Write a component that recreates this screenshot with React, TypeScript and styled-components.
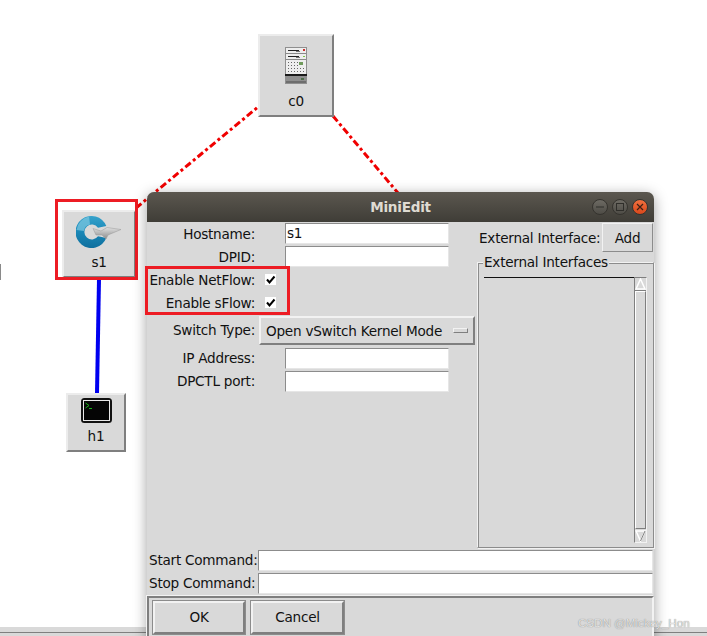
import React from "react";
import styled, { createGlobalStyle } from "styled-components";

const Global = createGlobalStyle`
  html, body { margin: 0; padding: 0; background: #fff; overflow: hidden; }
  #root { width: 707px; height: 636px; }
  * { box-sizing: border-box; }
`;

const Canvas = styled.div`
  position: relative;
  width: 707px;
  height: 636px;
  overflow: hidden;
  background: #fff;
  font-family: "DejaVu Sans", sans-serif;
  font-size: 13.6px;
  letter-spacing: -0.25px;
  color: #111;
`;

const Links = styled.svg`
  position: absolute;
  inset: 0;
`;

const BottomBar = styled.div`
  position: absolute;
  left: 0;
  right: 0;
  top: 627px;
  height: 9px;
  background: #d9d9d9;
  border-bottom: 2px solid #d9d9d9;
  &::after {
    content: "";
    display: block;
    margin-top: 5px;
    height: 1px;
    background: #7f7f7f;
  }
`;

const EdgeMark = styled.div`
  position: absolute;
  left: 0;
  top: 264px;
  width: 1px;
  height: 16px;
  background: #8a8a8a;
`;

const Node = styled.div<{ $x: number; $y: number; $w: number; $h: number; $gap?: number }>`
  position: absolute;
  left: ${(p) => p.$x}px;
  top: ${(p) => p.$y}px;
  width: ${(p) => p.$w}px;
  height: ${(p) => p.$h}px;
  background: #d9d9d9;
  border: 2px solid;
  border-color: #ececec #7f7f7f #7f7f7f #ececec;
  display: flex;
  flex-direction: column;
  align-items: center;
  justify-content: flex-end;
  gap: ${(p) => p.$gap ?? 5}px;
  padding-bottom: 5px;
  line-height: 17px;
`;

const Annotation = styled.div<{ $x: number; $y: number; $w: number; $h: number }>`
  position: absolute;
  left: ${(p) => p.$x}px;
  top: ${(p) => p.$y}px;
  width: ${(p) => p.$w}px;
  height: ${(p) => p.$h}px;
  border: 3px solid #ed1c24;
  pointer-events: none;
`;

const Window = styled.div`
  position: absolute;
  left: 147px;
  top: 192px;
  width: 507px;
  height: 460px;
  background: #d9d9d9;
  border-radius: 7px 7px 0 0;
  box-shadow: 0 3px 14px rgba(0, 0, 0, 0.38);
  display: flex;
  flex-direction: column;
`;

const TitleBar = styled.div`
  position: relative;
  height: 30px;
  flex: none;
  border-radius: 7px 7px 0 0;
  background: linear-gradient(#5b574f, #3f3d37);
  color: #dfdbd2;
  font-weight: 700;
  display: flex;
  align-items: center;
  justify-content: center;
`;

const WinButtons = styled.div`
  position: absolute;
  right: 6px;
  top: 7px;
  display: flex;
  gap: 4px;
`;

const WinButton = styled.div<{ $close?: boolean }>`
  width: 16px;
  height: 16px;
  border-radius: 50%;
  border: 1px solid #35332e;
  background: ${(p) => (p.$close ? "linear-gradient(#f0703f, #d9481c)" : "linear-gradient(#6d6a63, #4e4c46)")};
  display: flex;
  align-items: center;
  justify-content: center;
`;

const Main = styled.div`
  display: flex;
  height: 327px;
  flex: none;
`;

const LeftForm = styled.div`
  width: 329px;
  flex: none;
  display: grid;
  grid-template-columns: 108px 1fr;
  grid-auto-rows: min-content;
`;

const Label = styled.div<{ $h?: number }>`
  height: ${(p) => p.$h ?? 23}px;
  display: flex;
  align-items: center;
  justify-content: flex-end;
  white-space: nowrap;
`;

const FieldCell = styled.div<{ $top: number }>`
  height: 23px;
  padding: ${(p) => p.$top}px 0 0 30px;
  display: flex;
  align-items: flex-start;
`;

const Entry = styled.div<{ $w?: string }>`
  width: ${(p) => p.$w ?? "164px"};
  height: 21px;
  background: #fff;
  border: 1px solid;
  border-color: #8c8c8c #e6e6e6 #e6e6e6 #8c8c8c;
  padding: 0 1px;
  line-height: 19px;
`;

const CheckCell = styled.div`
  height: 23px;
  padding-left: 10px;
  display: flex;
  align-items: center;
`;

const CheckBox = styled.div`
  width: 11px;
  height: 11px;
  background: #fff;
  display: flex;
  align-items: center;
  justify-content: center;
`;

const Menu = styled.div`
  margin: 2px 0 0 4px;
  width: 216px;
  height: 29px;
  background: #d9d9d9;
  border: 2px solid;
  border-color: #f2f2f2 #7f7f7f #7f7f7f #f2f2f2;
  display: flex;
  align-items: center;
  justify-content: space-between;
  padding: 0 5px 0 5px;
  white-space: nowrap;
`;

const MenuMark = styled.div`
  width: 15px;
  height: 5px;
  background: #d9d9d9;
  border: 1px solid;
  border-color: #f2f2f2 #7f7f7f #7f7f7f #f2f2f2;
`;

const RightPane = styled.div`
  flex: 1;
  min-width: 0;
  padding: 1px 0 0 1px;
  display: flex;
  flex-direction: column;
`;

const InterfaceRow = styled.div`
  display: flex;
  align-items: center;
  justify-content: space-between;
  height: 29px;
  padding-left: 2px;
  padding-right: 1px;
  white-space: nowrap;
`;

const PlainButton = styled.div`
  width: 51px;
  height: 29px;
  flex: none;
  background: #d9d9d9;
  border: 1px solid;
  border-color: #f2f2f2 #8c8c8c #8c8c8c #f2f2f2;
  display: flex;
  align-items: center;
  justify-content: center;
`;

const FrameBox = styled.div`
  position: relative;
  margin-top: 10px;
  height: 286px;
  border: 1px solid;
  border-color: #f2f2f2 #8c8c8c #8c8c8c #f2f2f2;
  box-shadow: inset 1px 1px 0 #8c8c8c, 1px 1px 0 #f2f2f2;
  padding: 14px 6px 4px 6px;
  display: flex;
`;

const FrameTitle = styled.div`
  position: absolute;
  left: 5px;
  top: -9px;
  background: #d9d9d9;
  padding: 0 1px;
  line-height: 17px;
  white-space: nowrap;
`;

const ListArea = styled.div`
  flex: 1;
  border-top: 1px solid #111;
`;

const ScrollBar = styled.div`
  width: 13px;
  display: flex;
  flex-direction: column;
  background: #d9d9d9;
  border: 1px solid;
  border-color: #7f7f7f #f2f2f2 #f2f2f2 #7f7f7f;
`;

const ScrollArrow = styled.div`
  height: 13px;
  flex: none;
  display: flex;
`;

const ScrollTrack = styled.div`
  flex: 1;
  border: 1px solid;
  border-color: #fff #7f7f7f #7f7f7f #fff;
`;

const CommandRow = styled.div`
  display: flex;
  height: 23px;
  flex: none;
  align-items: flex-start;
  padding: 1px 1px 0 2px;
  line-height: 21px;
  white-space: nowrap;
`;

const CommandLabel = styled.div`
  width: 109px;
  flex: none;
`;

const Commands = styled.div`
  flex: none;
`;

const ButtonBar = styled.div`
  flex: 1;
  margin-top: 1px;
  border: 2px solid;
  border-color: #7f7f7f #f2f2f2 #f2f2f2 #7f7f7f;
  box-shadow: -1px -1px 0 #f2f2f2;
  padding: 3px 0 0 4px;
  display: flex;
  gap: 6px;
  align-items: flex-start;
`;

const ActionButton = styled.div<{ $w: number }>`
  width: ${(p) => p.$w}px;
  height: 33px;
  padding-bottom: 1px;
  background: #d9d9d9;
  border: 2px solid;
  border-color: #f2f2f2 #7f7f7f #7f7f7f #f2f2f2;
  outline: 1px solid #8c8c8c;
  display: flex;
  align-items: center;
  justify-content: center;
`;

const Watermark = styled.div`
  position: absolute;
  left: 578px;
  top: 615px;
  font-family: "Liberation Sans", sans-serif;
  font-size: 11.6px;
  letter-spacing: 0;
  line-height: 16px;
  color: #e2e2e2;
  text-shadow: 0 0 1px #6f6f6f;
  white-space: nowrap;
`;

const ServerIcon = () => (
  <svg width="22" height="37" viewBox="0 0 22 37">
    <rect x="0.5" y="0.5" width="21" height="36" fill="#eeeeee" stroke="#8f8f8f" strokeWidth="1" />
    <rect x="1" y="6" width="20" height="1" fill="#8a8a8a" />
    <rect x="3" y="3" width="11" height="1" fill="#222" />
    <rect x="11" y="4" width="4" height="1" fill="#777" />
    <rect x="18" y="2" width="2" height="2" fill="#c9302c" />
    <rect x="1" y="12" width="20" height="1" fill="#8a8a8a" />
    <rect x="3" y="9" width="11" height="1" fill="#222" />
    <rect x="11" y="10" width="4" height="1" fill="#777" />
    <rect x="18" y="9" width="2" height="1" fill="#7ac943" />
    <rect x="14" y="15" width="4" height="3" fill="#6f9a5b" />
    {[15, 18, 21].map((y) =>
      [3, 6, 9, 12].map((x) => <rect key={`${x}-${y}`} x={x} y={y} width="1" height="1" fill="#666" />)
    )}
    {[21, 24].map((y) =>
      [3, 6, 9, 12, 15, 18].map((x) => <rect key={`b${x}-${y}`} x={x} y={y} width="1" height="1" fill="#666" />)
    )}
    <rect x="0" y="27" width="22" height="2" fill="#1b1b1b" />
    <rect x="1" y="29" width="20" height="7" fill="#8f8f8f" />
    <rect x="1" y="34" width="20" height="2" fill="#6e6e6e" />
    <rect x="16" y="31" width="3" height="2" fill="#4e6e4a" />
  </svg>
);

const SwitchIcon = () => (
  <svg width="46" height="33" viewBox="0 0 46 33">
    <defs>
      <linearGradient id="ring" x1="0" y1="0" x2="0" y2="1">
        <stop offset="0" stopColor="#36a2cb" />
        <stop offset="0.5" stopColor="#1a87b6" />
        <stop offset="1" stopColor="#0f6f9e" />
      </linearGradient>
      <linearGradient id="arrow" x1="0" y1="0" x2="0" y2="1">
        <stop offset="0" stopColor="#e0e0e0" />
        <stop offset="1" stopColor="#8c8c8c" />
      </linearGradient>
    </defs>
    <path d="M30.3 10 A16 16 0 1 0 30.3 22 L22 20.3 A7.5 7.5 0 1 1 22 11.7 Z" fill="url(#ring)" />
    <path d="M0.5 14 A16 16 0 0 1 13 0.6 L14 8.6 A7.5 7.5 0 0 0 8 15 Z" fill="#79c5df" opacity="0.75" />
    <path d="M17 12.5 L25 15 L31 11.5 L45 13.5 L32 19 L30 23 L26 19 L20 19 Z" fill="url(#arrow)" stroke="#999" strokeWidth="0.5" />
  </svg>
);

const TerminalIcon = () => (
  <svg width="31" height="25" viewBox="0 0 31 25">
    <rect x="1" y="1" width="29" height="23" rx="2.5" fill="#000" stroke="#111" strokeWidth="2" />
    <rect x="2.5" y="2.5" width="26" height="20" fill="#050505" stroke="#e8e8e8" strokeWidth="1" />
    <path d="M4.5 5 L8 7.5 L4.5 10" fill="none" stroke="#17b317" strokeWidth="1" />
    <rect x="8" y="10" width="3" height="1" fill="#17b317" />
  </svg>
);

const Check = () => (
  <svg width="11" height="11" viewBox="0 0 11 11">
    <path d="M2 5.5 L4.5 8.5 L9.5 2.5" fill="none" stroke="#000" strokeWidth="2" />
  </svg>
);

const UpArrow = () => (
  <svg width="11" height="13" viewBox="0 0 11 13">
    <path d="M5.5 1 L10 11 H1 Z" fill="#d9d9d9" stroke="#fff" strokeWidth="1.5" />
    <path d="M0 12.5 H11" stroke="#7f7f7f" />
  </svg>
);

const DownArrow = () => (
  <svg width="11" height="13" viewBox="0 0 11 13">
    <path d="M1 2 H10 L5.5 12 Z" fill="#d9d9d9" stroke="#fff" strokeWidth="1.5" />
    <path d="M5.5 12 L10 2" stroke="#7f7f7f" />
  </svg>
);

export default function App() {
  return (
    <>
      <Global />
      <Canvas>
        <BottomBar />
        <EdgeMark />
        <Links width="707" height="636" viewBox="0 0 707 636">
          <path d="M136 208 L258 107" stroke="#f00000" strokeWidth="3" strokeDasharray="7 3 3 3" fill="none" />
          <path d="M333 116 L398 193" stroke="#f00000" strokeWidth="3" strokeDasharray="7 3 3 3" fill="none" />
          <path d="M99 279 L97 393" stroke="#0000f0" strokeWidth="4" fill="none" />
        </Links>

        <Node $x={258} $y={34} $w={76} $h={83} $gap={9}>
          <ServerIcon />
          <span>c0</span>
        </Node>
        <Node $x={62} $y={210} $w={74} $h={68}>
          <SwitchIcon />
          <span>s1</span>
        </Node>
        <Node $x={66} $y={393} $w={60} $h={59}>
          <TerminalIcon />
          <span>h1</span>
        </Node>

        <Annotation $x={55} $y={199} $w={83} $h={81} />

        <Window>
          <TitleBar>
            MiniEdit
            <WinButtons>
              <WinButton>
                <svg width="10" height="10" viewBox="0 0 10 10">
                  <path d="M1 5 H9" stroke="#2f2e2a" strokeWidth="1" />
                </svg>
              </WinButton>
              <WinButton>
                <svg width="10" height="10" viewBox="0 0 10 10">
                  <rect x="1.5" y="1.5" width="7" height="7" fill="none" stroke="#2f2e2a" strokeWidth="1" />
                </svg>
              </WinButton>
              <WinButton $close>
                <svg width="10" height="10" viewBox="0 0 10 10">
                  <path d="M2 2 L8 8 M8 2 L2 8" stroke="#3b2015" strokeWidth="1.2" />
                </svg>
              </WinButton>
            </WinButtons>
          </TitleBar>

          <Main>
            <LeftForm>
              <Label>Hostname:</Label>
              <FieldCell $top={1}>
                <Entry>s1</Entry>
              </FieldCell>
              <Label>DPID:</Label>
              <FieldCell $top={1}>
                <Entry />
              </FieldCell>
              <Label>Enable NetFlow:</Label>
              <CheckCell>
                <CheckBox>
                  <Check />
                </CheckBox>
              </CheckCell>
              <Label>Enable sFlow:</Label>
              <CheckCell>
                <CheckBox>
                  <Check />
                </CheckBox>
              </CheckCell>
              <Label $h={32}>Switch Type:</Label>
              <div>
                <Menu>
                  Open vSwitch Kernel Mode
                  <MenuMark />
                </Menu>
              </div>
              <Label>IP Address:</Label>
              <FieldCell $top={2}>
                <Entry />
              </FieldCell>
              <Label>DPCTL port:</Label>
              <FieldCell $top={2}>
                <Entry />
              </FieldCell>
            </LeftForm>

            <RightPane>
              <InterfaceRow>
                External Interface:
                <PlainButton>Add</PlainButton>
              </InterfaceRow>
              <FrameBox>
                <FrameTitle>External Interfaces</FrameTitle>
                <ListArea />
                <ScrollBar>
                  <ScrollArrow>
                    <UpArrow />
                  </ScrollArrow>
                  <ScrollTrack />
                  <ScrollArrow>
                    <DownArrow />
                  </ScrollArrow>
                </ScrollBar>
              </FrameBox>
            </RightPane>
          </Main>

          <Commands>
            <CommandRow>
              <CommandLabel>Start Command:</CommandLabel>
              <Entry $w="395px" />
            </CommandRow>
            <CommandRow>
              <CommandLabel>Stop Command:</CommandLabel>
              <Entry $w="395px" />
            </CommandRow>
          </Commands>

          <ButtonBar>
            <ActionButton $w={92}>OK</ActionButton>
            <ActionButton $w={93}>Cancel</ActionButton>
          </ButtonBar>
        </Window>

        <Annotation $x={145} $y={266} $w={145} $h={49} />
        <Watermark>CSDN @Mickey_Hon</Watermark>
      </Canvas>
    </>
  );
}
